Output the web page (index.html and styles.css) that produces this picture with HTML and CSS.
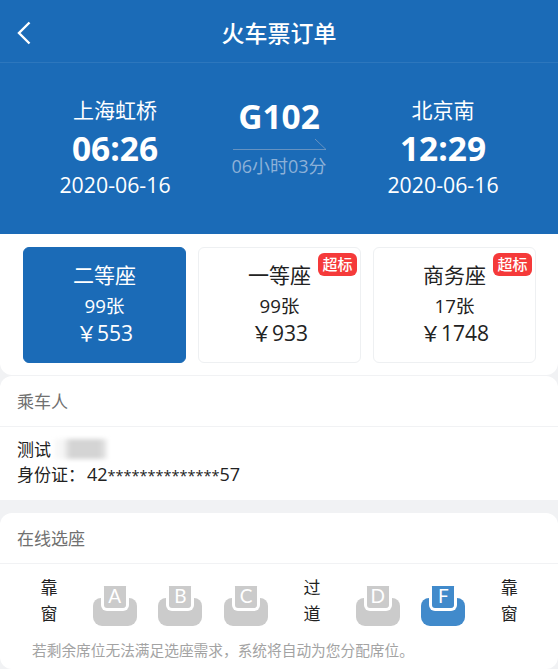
FILE: index.html
```html
<!DOCTYPE html>
<html lang="zh-CN">
<head>
<meta charset="utf-8">
<title>火车票订单</title>
<link rel="stylesheet" href="styles.css">
</head>
<body>
<div class="page">
  <header class="topbar">
    <svg class="back" viewBox="0 0 16 26" width="16" height="26"><path d="M13.5 2.5 L3 13 L13.5 23.5" fill="none" stroke="#fff" stroke-width="2.4"/></svg>
    <h1 class="title">火车票订单</h1>
  </header>
  <section class="hero">
    <div class="stop">
      <div class="station">上海虹桥</div>
      <div class="time">06:26</div>
      <div class="date">2020-06-16</div>
    </div>
    <div class="train">
      <div class="code">G102</div>
      <svg class="arrow" viewBox="0 0 94 12" width="94" height="12"><path d="M0 11.5 H93 L82 1" fill="none" stroke="#7f9fc4" stroke-opacity=".75" stroke-width="1"/></svg>
      <div class="duration">06小时03分</div>
    </div>
    <div class="stop">
      <div class="station">北京南</div>
      <div class="time">12:29</div>
      <div class="date">2020-06-16</div>
    </div>
  </section>
  <section class="fares">
    <div class="fare active">
      <div class="fare-name">二等座</div>
      <div class="fare-left">99张</div>
      <div class="fare-price">￥553</div>
    </div>
    <div class="fare">
      <span class="badge">超标</span>
      <div class="fare-name">一等座</div>
      <div class="fare-left">99张</div>
      <div class="fare-price">￥933</div>
    </div>
    <div class="fare">
      <span class="badge">超标</span>
      <div class="fare-name">商务座</div>
      <div class="fare-left">17张</div>
      <div class="fare-price">￥1748</div>
    </div>
  </section>
  <section class="card passenger">
    <div class="card-head">乘车人</div>
    <div class="person">
      <div class="person-name">测试<span class="smudge"></span></div>
      <div>身份证：<span class="idno">42<span class="mask">**************</span>57</span></div>
    </div>
  </section>
  <section class="card seats">
    <div class="card-head">在线选座</div>
    <div class="seat-row">
      <div class="label">靠<br>窗</div>
      <div class="seat"><span class="key">A</span></div>
      <div class="seat"><span class="key">B</span></div>
      <div class="seat"><span class="key">C</span></div>
      <div class="label">过<br>道</div>
      <div class="seat"><span class="key">D</span></div>
      <div class="seat on"><span class="key">F</span></div>
      <div class="label">靠<br>窗</div>
    </div>
    <p class="notice">若剩余席位无法满足选座需求，系统将自动为您分配席位。</p>
  </section>
</div>
</body>
</html>
```
FILE: styles.css
```css
* { box-sizing: border-box; margin: 0; padding: 0; }
html, body { height: 100%; overflow: hidden; }
body { background: #f1f2f4; font-family: "Open Sans", "Noto Sans CJK SC", sans-serif; color: #222; }
.page { width: 558px; height: 669px; overflow: hidden; }

.topbar { height: 63px; background: #1b6bb7; border-bottom: 1px solid #2d77bd; display: flex; align-items: center; justify-content: center; position: relative; padding-top: 4px; }
.back { position: absolute; left: 16px; top: 20px; }
.title { font-size: 23px; font-weight: 500; color: #fff; line-height: 1; }

.hero { height: 171px; background: #1b6bb7; color: #fff; display: grid; grid-template-columns: 164px 164px 164px; justify-content: center; padding-top: 31px; text-align: center; }
.station { font-size: 21px; line-height: 32px; }
.time { font-size: 33.5px; font-weight: 700; line-height: 44px; }
.date { font-size: 21.3px; line-height: 30px; }
.code { font-size: 33.5px; font-weight: 700; line-height: 44px; }
.arrow { display: block; margin: 0 auto; transform: translateX(1px); }
.duration { font-size: 18px; line-height: 26px; color: #8db1d8; margin-top: 3px; }

.fares { height: 141px; background: #fff; border-radius: 0 0 12px 12px; padding: 13px 22px 0 23px; display: grid; grid-template-columns: repeat(3, 163px); gap: 12px; }
.fare { height: 116px; border: 1px solid #eef0f2; border-radius: 6px; position: relative; text-align: center; color: #222; padding-top: 13px; }
.fare.active { background: #1b6bb7; border-color: #1b6bb7; color: #fff; }
.fare-name { font-size: 21px; line-height: 29px; }
.fare-left { font-size: 18.7px; line-height: 28px; margin: 2px 0 -1px; }
.fare-price { font-size: 21px; line-height: 29px; }
.badge { position: absolute; top: 5px; right: 3px; width: 39px; height: 23px; border-radius: 6px; background: #f53a3a; color: #fff; font-size: 15px; font-weight: 500; line-height: 23px; text-align: center; }

.card { background: #fff; border-radius: 12px 12px 0 0; }
.passenger { height: 124px; margin-top: 1px; }
.seats { margin-top: 13px; height: 156px; border-radius: 12px; }
.card-head { height: 51px; padding: 0 17px; border-bottom: 1px solid #f1f2f4; font-size: 17px; line-height: 52px; color: #707070; }
.person { padding: 10px 17px 0; font-size: 17px; line-height: 25px; color: #222; }
.person-name { position: relative; }
.idno { font-size: 18px; margin-left: 2px; }
.mask { font-size: 14.5px; }
.smudge { position: absolute; left: 38px; top: 2px; width: 52px; height: 20px; background: linear-gradient(90deg, #f7f7f7 0 15%, #d4d4d4 30% 85%, #ececec 100%); filter: blur(2px); }

.seat-row { display: grid; grid-template-columns: repeat(8, 65.75px); padding: 11px 16px 0; }
.label { text-align: center; font-size: 17px; line-height: 26px; color: #222; }
.seat { position: relative; width: 44px; height: 40px; margin: 11px auto 0; }
.seat::before { content: ""; position: absolute; left: 0; right: 0; bottom: 0; height: 28px; background: #cbcbcb; border-radius: 8px 8px 9px 9px; }
.key { position: absolute; left: 8px; top: 0; width: 28px; height: 25px; background: #cbcbcb; border: 3px solid #fff; border-top: 0; border-radius: 3px 3px 6px 6px; color: #fff; font-size: 19px; line-height: 20px; text-align: center; font-family: "Lato", "Open Sans", sans-serif; }
.on::before, .on .key { background: #418acb; }
.notice { font-size: 14.7px; line-height: 20px; color: #a3a3a3; padding: 13px 0 0 32px; white-space: nowrap; }
```
